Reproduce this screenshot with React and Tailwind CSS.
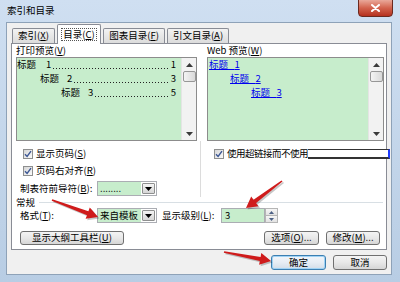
import React from "react";

const GREEN = "bg-[#c7edcc]";

function Check() {
  return (
    <span className="w-[10px] h-[10px] border border-[#8e8f8f] bg-gradient-to-br from-[#d6d6d6] to-[#fbfbfb] flex items-center justify-center shrink-0">
      <svg width="8" height="8" viewBox="0 0 8 8">
        <path d="M1 4.2 L3.1 6.4 L7 1.1" stroke="#3b5694" strokeWidth="1.4" fill="none" />
      </svg>
    </span>
  );
}

function ScrollBar() {
  return (
    <div className="w-[15px] h-full bg-[#f2f2f2] border-l border-[#e4e4e4] flex flex-col items-center shrink-0">
      <div className="h-[13px] flex items-center justify-center">
        <svg width="7" height="4" viewBox="0 0 7 4">
          <path d="M0 4 L3.5 0 L7 4Z" fill="#3a3a3a" />
        </svg>
      </div>
      <div className="w-[13px] h-[11px] border border-[#979797] rounded-[2px] bg-gradient-to-r from-[#f4f4f4] to-[#d9d9d9]" />
      <div className="flex-1" />
      <div className="h-[12px] flex items-center justify-center">
        <svg width="7" height="4" viewBox="0 0 7 4">
          <path d="M0 0 L7 0 L3.5 4Z" fill="#3a3a3a" />
        </svg>
      </div>
    </div>
  );
}

function Combo({ text }) {
  return (
    <div className="flex h-[15px] w-[60px] border border-[#abadb3] bg-white shrink-0">
      <div className={`w-[45px] ${GREEN} flex items-center pl-[2px] whitespace-nowrap`}>{text}</div>
      <div className="w-[13px] m-px bg-gradient-to-b from-[#f4f4f4] to-[#d6d6d6] border border-[#8e8f8f] rounded-[1px] flex items-center justify-center">
        <svg width="7" height="4" viewBox="0 0 7 4">
          <path d="M0 0 L7 0 L3.5 4Z" fill="#000" />
        </svg>
      </div>
    </div>
  );
}

function Btn({ children, className = "" }) {
  return (
    <div
      className={`h-[14px] border border-[#707070] rounded-[3px] bg-gradient-to-b from-[#f4f4f4] via-[#e8e8e8] to-[#d6d6d6] flex items-center justify-center whitespace-nowrap ${className}`}
    >
      {children}
    </div>
  );
}

function Key({ k }) {
  return (
    <span>
      (<span className="underline">{k}</span>)
    </span>
  );
}

function Dots() {
  return (
    <span className="flex-1 self-end mb-[3px] mx-[2px] h-px bg-[linear-gradient(to_right,#222_1px,transparent_1px)] bg-[length:3px_1px]" />
  );
}

function arrowPoints(x1, y1, x2, y2) {
  const len = Math.hypot(x2 - x1, y2 - y1);
  const dx = (x2 - x1) / len;
  const dy = (y2 - y1) / len;
  const nx = -dy;
  const ny = dx;
  const bx = x2 - dx * 11;
  const by = y2 - dy * 11;
  const p = [
    [x1 + nx * 0.8, y1 + ny * 0.8],
    [bx + nx * 2.1, by + ny * 2.1],
    [bx + nx * 6, by + ny * 6],
    [x2, y2],
    [bx - nx * 6, by - ny * 6],
    [bx - nx * 2.1, by - ny * 2.1],
    [x1 - nx * 0.8, y1 - ny * 0.8],
  ];
  return p.map((q) => q.map((v) => v.toFixed(1)).join(",")).join(" ");
}

const arrows = [
  [52, 200, 98, 217],
  [282, 181, 246, 208],
  [224, 252, 271, 261],
];

export default function App() {
  return (
    <div className="relative w-[400px] h-[282px] overflow-hidden flex flex-col bg-gradient-to-b from-[#cfdff1] to-[#b8cde4] text-[9.5px] leading-none text-black font-['Noto_Sans_CJK_SC','Noto_Sans',sans-serif]">
      {/* title bar */}
      <div className="h-[22px] flex items-start justify-between pl-[7px] shrink-0">
        <span className="mt-[6px]">索引和目录</span>
        <div className="mr-[7px] w-[35px] h-[18px] -mt-px border border-[#6b2a20] rounded-b-[4px] bg-gradient-to-b from-[#e9a89a] via-[#d2624d] to-[#b5301e] flex items-center justify-center">
          <svg width="9" height="8" viewBox="0 0 9 8">
            <path d="M1 1 L8 7 M8 1 L1 7" stroke="#fff" strokeWidth="2" strokeLinecap="round" />
          </svg>
        </div>
      </div>

      {/* dialog body */}
      <div className="ml-[6px] w-[386px] h-[253px] border border-[#8ea2b8] bg-[#f0f0f0] flex flex-col shrink-0">
        {/* tabs */}
        <div className="h-[20px] flex items-end gap-[2px] pl-[5px]">
          <div className="w-[43px] h-[15px] border border-b-0 border-[#898c95] rounded-t-[2px] bg-gradient-to-b from-[#f3f3f3] to-[#dcdcdc] flex items-center justify-center whitespace-nowrap">
            索引<Key k="X" />
          </div>
          <div className="relative z-10 w-[44px] h-[20px] -mb-px border border-b-0 border-[#898c95] rounded-t-[2px] bg-white flex items-center justify-center whitespace-nowrap">
            <span className="outline outline-1 outline-dotted outline-[#555] px-[1px] py-[1px]">
              目录<Key k="C" />
            </span>
          </div>
          <div className="w-[62px] h-[15px] border border-b-0 border-[#898c95] rounded-t-[2px] bg-gradient-to-b from-[#f3f3f3] to-[#dcdcdc] flex items-center justify-center whitespace-nowrap">
            图表目录<Key k="F" />
          </div>
          <div className="w-[62px] h-[15px] border border-b-0 border-[#898c95] rounded-t-[2px] bg-gradient-to-b from-[#f3f3f3] to-[#dcdcdc] flex items-center justify-center whitespace-nowrap">
            引文目录<Key k="A" />
          </div>
        </div>

        {/* tab panel */}
        <div className="ml-[4px] w-[376px] h-[207px] border border-[#898c95] bg-white flex flex-col">
          {/* previews */}
          <div className="flex pl-[4px]">
            <div className="w-[181px] flex flex-col">
              <div className="h-[13px] flex items-center">
                打印预览<Key k="V" />
              </div>
              <div className="h-[84px] border border-[#8c8c8c] flex">
                <div className={`flex-1 ${GREEN} flex flex-col pr-[5px]`}>
                  <div className="h-[14px] flex items-center">
                    <span>标题</span>
                    <span className="ml-[10px]">1</span>
                    <Dots />
                    <span>1</span>
                  </div>
                  <div className="h-[14px] flex items-center pl-[23px]">
                    <span>标题</span>
                    <span className="ml-[8px]">2</span>
                    <Dots />
                    <span>3</span>
                  </div>
                  <div className="h-[14px] flex items-center pl-[44px]">
                    <span>标题</span>
                    <span className="ml-[8px]">3</span>
                    <Dots />
                    <span>5</span>
                  </div>
                </div>
                <ScrollBar />
              </div>
            </div>

            <div className="ml-[10px] w-[177px] flex flex-col">
              <div className="h-[13px] flex items-center">
                Web 预览<Key k="W" />
              </div>
              <div className="h-[84px] border border-[#8c8c8c] flex">
                <div className={`flex-1 ${GREEN} flex flex-col text-[#0000ee]`}>
                  <div className="h-[14px] flex items-center pl-[1px]">
                    <span className="underline whitespace-nowrap">标题{"\u00a0\u00a0\u00a0"}1</span>
                  </div>
                  <div className="h-[14px] flex items-center pl-[22px]">
                    <span className="underline whitespace-nowrap">标题{"\u00a0\u00a0\u00a0"}2</span>
                  </div>
                  <div className="h-[14px] flex items-center pl-[43px]">
                    <span className="underline whitespace-nowrap">标题{"\u00a0\u00a0\u00a0"}3</span>
                  </div>
                </div>
                <ScrollBar />
              </div>
            </div>
          </div>

          {/* options */}
          <div className="flex">
            <div className="w-[188px] flex flex-col shrink-0">
              <div className="mt-[8px] h-[10px] flex items-center gap-[3px] pl-[11px]">
                <Check />
                <span>
                  显示页码<Key k="S" />
                </span>
              </div>
              <div className="mt-[7px] h-[10px] flex items-center gap-[3px] pl-[11px]">
                <Check />
                <span>
                  页码右对齐<Key k="R" />
                </span>
              </div>
              <div className="mt-[5px] h-[15px] flex items-center pl-[8px]">
                <span className="w-[77px] whitespace-nowrap">
                  制表符前导符<Key k="B" />:
                </span>
                <Combo text="........" />
              </div>
            </div>
            <div className="flex-1 h-[56px] border-l border-[#dcdcdc] flex flex-col">
              <div className="mt-[8px] h-[10px] flex items-center pl-[13px]">
                <Check />
                <span className="ml-[3px] whitespace-nowrap shrink-0 tracking-[-0.5px]">使用超链接而不使用</span>
                <div className="w-[82px] h-[10px] shrink-0 bg-white border-t border-b-2 border-[#333] border-r-2 border-r-[#1e3cff]" />
              </div>
            </div>
          </div>

          {/* general group */}
          <div className="h-[11px] flex items-center pl-[4px]">
            <span>常规</span>
            <div className="flex-1 h-px ml-[4px] mr-[3px] bg-[#d8dfe4]" />
          </div>
          <div className="h-[15px] flex items-center pl-[8px]">
            <span className="w-[77px]">
              格式<Key k="T" />:
            </span>
            <Combo text="来自模板" />
            <span className="ml-[5px] w-[59px] whitespace-nowrap">
              显示级别<Key k="L" />:
            </span>
            <div className="flex h-[15px]">
              <div className={`w-[44px] ${GREEN} border border-[#abadb3] flex items-center pl-[3px]`}>3</div>
              <div className="w-[13px] flex flex-col">
                <div className="flex-1 border border-[#b5b5b5] bg-gradient-to-b from-[#f6f6f6] to-[#e2e2e2] flex items-center justify-center">
                  <svg width="5" height="3" viewBox="0 0 5 3">
                    <path d="M0 3 L2.5 0 L5 3Z" fill="#4d6185" />
                  </svg>
                </div>
                <div className="flex-1 border border-t-0 border-[#b5b5b5] bg-gradient-to-b from-[#f6f6f6] to-[#e2e2e2] flex items-center justify-center">
                  <svg width="5" height="3" viewBox="0 0 5 3">
                    <path d="M0 0 L5 0 L2.5 3Z" fill="#4d6185" />
                  </svg>
                </div>
              </div>
            </div>
          </div>
          <div className="mt-[8px] flex items-center pl-[8px] pr-[6px]">
            <Btn className="w-[104px]">
              显示大纲工具栏<Key k="U" />
            </Btn>
            <Btn className="w-[55px] ml-auto">
              选项<Key k="O" />...
            </Btn>
            <Btn className="w-[54px] ml-[7px]">
              修改<Key k="M" />...
            </Btn>
          </div>
        </div>

        {/* OK / Cancel */}
        <div className="mt-[5px] flex justify-end gap-[7px] pr-[4px]">
          <div className="w-[55px] h-[15px] border border-[#3c7fb1] rounded-[3px] bg-gradient-to-b from-[#f2f6fa] via-[#e6edf4] to-[#d3dde8] shadow-[inset_0_0_0_1px_#9fd3f5] flex items-center justify-center">
            确定
          </div>
          <Btn className="w-[54px] h-[15px]">取消</Btn>
        </div>
      </div>

      {/* red annotation arrows */}
      <svg className="absolute inset-0 pointer-events-none" width="400" height="282">
        {arrows.map((a, i) => (
          <g key={i}>
            <polygon
              points={arrowPoints(a[0] + 1.5, a[1] + 1.5, a[2] + 1.5, a[3] + 1.5)}
              fill="rgba(0,0,0,0.22)"
            />
            <polygon points={arrowPoints(a[0], a[1], a[2], a[3])} fill="#cf1b1b" />
          </g>
        ))}
      </svg>
    </div>
  );
}
